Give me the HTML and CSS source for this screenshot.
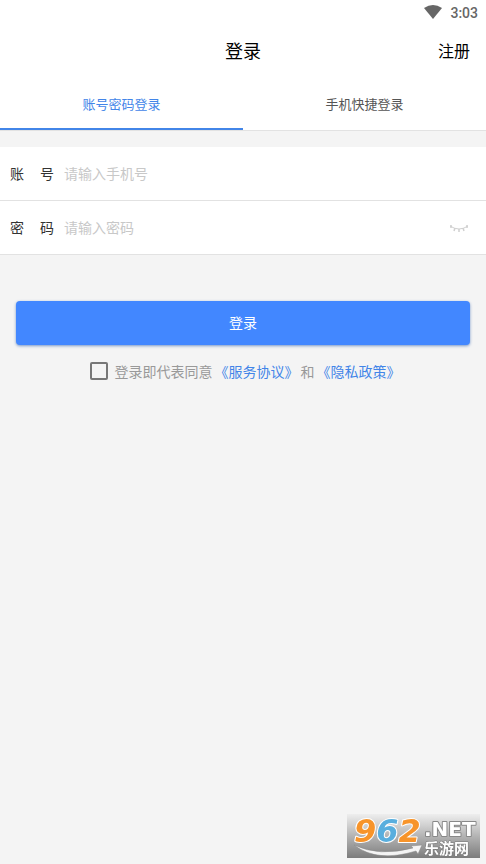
FILE: index.html
```html
<!DOCTYPE html>
<html lang="zh-CN">
<head>
<meta charset="utf-8">
<meta name="viewport" content="width=device-width, initial-scale=1">
<title>登录</title>
<link rel="stylesheet" href="styles.css">
</head>
<body>
<div class="status">
  <svg width="18" height="14" viewBox="0 0 18 14" aria-hidden="true"><path d="M0 3Q9-3 18 3L9 14Z" fill="#666"/></svg>
  <span>3:03</span>
</div>
<header class="header">
  <h1>登录</h1>
  <a class="register" href="#register">注册</a>
</header>
<nav class="tabs">
  <button class="tab active" type="button">账号密码登录</button>
  <button class="tab" type="button">手机快捷登录</button>
</nav>
<form>
  <div class="fields">
    <div class="row">
      <label for="account"><span>账</span><span>号</span></label>
      <input id="account" type="text" placeholder="请输入手机号">
    </div>
    <div class="row">
      <label for="password"><span>密</span><span>码</span></label>
      <input id="password" type="password" placeholder="请输入密码">
      <button class="eye" type="button" aria-label="显示密码">
        <svg width="20" height="8" viewBox="0 0 20 8" fill="none" stroke="#d0d0d0"><path d="M1 2Q10 8 19 2"/><path d="M2 1V4M6 4L5 7M10 5V8M14 4L15 7M18 1V4" stroke-width="1.5"/></svg>
      </button>
    </div>
  </div>
  <div class="actions">
    <button class="submit" type="submit">登录</button>
    <div class="agreement">
      <input id="agree" type="checkbox">
      <label for="agree">登录即代表同意</label>
      <a href="#service">《服务协议》</a>
      <span>和</span>
      <a href="#privacy">《隐私政策》</a>
    </div>
  </div>
</form>
<svg class="watermark" width="133" height="44" viewBox="0 0 133 44" role="img" aria-label="962.NET 乐游网">
  <defs>
    <linearGradient id="shade" x2="0" y2="1"><stop stop-color="#eee"/><stop offset=".5" stop-color="#b4b4b4"/><stop offset="1" stop-color="#7c7c7c"/></linearGradient>
  </defs>
  <rect width="133" height="44" fill="url(#shade)"/>
  <path d="M7 31Q32 43 66 34L64 32L75 31L71 40L69 37Q30 49 7 31Z" fill="#f4f4f4" stroke="#888" stroke-width=".5"/>
  <text class="digits" x="7" y="28"><tspan fill="#f7942a">9</tspan><tspan fill="#58aede">6</tspan><tspan fill="#f7942a">2</tspan></text>
  <text class="net" x="77" y="22">.NET</text>
  <text class="site" x="77" y="40">乐游网</text>
</svg>
</body>
</html>
```
FILE: styles.css
```css
* { box-sizing: border-box; }
body {
  margin: 0;
  min-height: 100vh;
  background: #f4f4f4;
  color: #333;
  font: 14px/20px "Noto Sans CJK SC", sans-serif;
}
button, input { font: inherit; }
button { border: 0; padding: 0; background: none; }
a { text-decoration: none; }
.status {
  display: flex;
  justify-content: flex-end;
  align-items: center;
  gap: 8px;
  height: 24px;
  padding-right: 8px;
  background: #fff;
  color: #666;
  font: 500 14px/24px Roboto, sans-serif;
}
.status span { padding-top: 2px; }
.header {
  display: grid;
  grid-template-columns: 1fr auto 1fr;
  align-items: center;
  height: 54px;
  padding: 0 16px 2px;
  background: #fff;
}
.header h1 {
  grid-column: 2;
  margin: 0;
  color: #000;
  font-size: 18px;
  font-weight: 400;
}
.register { justify-self: end; color: #000; font-size: 16px; }
.tabs {
  display: flex;
  height: 53px;
  background: #fff;
  border-bottom: 1px solid #e2e2e2;
}
.tab {
  flex: 1;
  padding-top: 2px;
  color: #555;
  font-size: 13px;
  border-bottom: 2px solid transparent;
}
.tab.active { color: #4285e8; border-color: #4285e8; }
.fields { margin-top: 16px; background: #fff; }
.row {
  display: flex;
  align-items: center;
  height: 54px;
  padding: 0 16px 2px 10px;
  border-bottom: 1px solid #e2e2e2;
}
.row label {
  display: flex;
  justify-content: space-between;
  width: 44px;
  margin-right: 10px;
}
.row input {
  flex: 1;
  min-width: 0;
  padding: 0;
  border: 0;
  outline: 0;
  background: none;
}
.row input::placeholder { color: #c8c8c8; }
.eye { display: flex; padding: 10px 1px 8px; }
.actions { padding: 46px 16px 0; }
.submit {
  display: block;
  width: 100%;
  height: 44px;
  padding-bottom: 2px;
  border-radius: 4px;
  background: #4287ff;
  color: #fff;
  box-shadow: 0 1px 3px #7796c8;
}
.agreement {
  display: flex;
  justify-content: center;
  align-items: center;
  gap: 2px;
  margin-top: 16px;
  padding-left: 4px;
  color: #999;
}
.agreement a { color: #4285e8; }
.agreement input {
  appearance: none;
  width: 18px;
  height: 18px;
  margin: 0 5px 0 0;
  border: 2px solid #777;
  border-radius: 2px;
}
.agreement input:checked { background: #4287ff; }
.watermark { position: fixed; right: 6px; bottom: 6px; overflow: visible; }
.watermark text { paint-order: stroke; stroke-linejoin: round; }
.digits {
  font: italic bold 32px "DejaVu Sans", sans-serif;
  stroke: #fff;
  stroke-width: 2px;
}
.net {
  font: bold 20px "DejaVu Sans", sans-serif;
  fill: #fff;
  stroke: #888;
  stroke-width: 2px;
}
.site {
  font: bold 15px "Noto Sans CJK SC", sans-serif;
  fill: #fff;
  stroke: #777;
  stroke-width: 1px;
}
```
